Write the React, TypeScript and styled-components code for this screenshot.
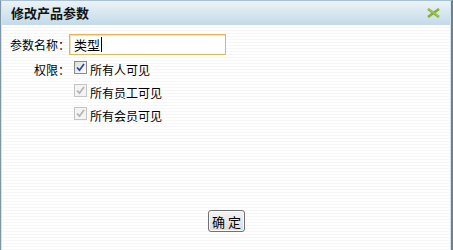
import React from "react";
import styled, { createGlobalStyle } from "styled-components";

const Global = createGlobalStyle`
  html, body { margin: 0; padding: 0; height: 100%; background: #fff; }
  #root { height: 100%; }
  body { font-family: "SimSun", "Noto Sans CJK SC", sans-serif; font-size: 12px; color: #000; }
`;

const Dialog = styled.div`
  box-sizing: border-box;
  height: 250px;
  width: 453px;
  display: flex;
  flex-direction: column;
  border-left: 1px solid #8097a6;
  border-right: 2px solid #6f8089;
  border-top: 1px solid #a8c2d2;
  box-shadow: inset 1px 0 0 #d3e4ee, inset -1px 0 0 #d3e4ee;
`;

const TitleBar = styled.div`
  height: 24px;
  flex: none;
  display: flex;
  align-items: center;
  justify-content: space-between;
  padding: 0 9px 0 9px;
  background: linear-gradient(#ecf3f7, #c3dae8);
  border-left: 1px solid #d3e4ee;
  border-right: 1px solid #d3e4ee;
`;

const Title = styled.div`
  font-family: "Noto Sans CJK SC", sans-serif;
  font-weight: bold;
  font-size: 13px;
  line-height: 24px;
  color: #111;
`;

const CloseBtn = styled.button`
  border: 0;
  background: none;
  padding: 0;
  margin: 0;
  width: 16px;
  height: 12px;
  display: flex;
  align-items: center;
  justify-content: center;
  cursor: pointer;
`;

const Body = styled.div`
  flex: 1;
  display: flex;
  flex-direction: column;
  background: repeating-linear-gradient(#ffffff 0 2px, #f6f6f6 2px 3px);
  border-left: 1px solid #d3e4ee;
  border-right: 1px solid #d3e4ee;
`;

const Form = styled.div`
  display: grid;
  grid-template-columns: 60px 1fr;
  column-gap: 0;
  padding: 8px 0 0 8px;
  align-items: center;
  grid-auto-rows: 23px;
  row-gap: 0;
`;

const Label = styled.div<{ $first?: boolean }>`
  font-family: "Noto Sans CJK SC", sans-serif;
  text-align: right;
  white-space: nowrap;
  font-size: 12px;
  line-height: 23px;
  margin-top: ${(p) => (p.$first ? "0" : "3px")};
`;

const Cell = styled.div<{ $first?: boolean }>`
  display: flex;
  align-items: center;
  margin-top: ${(p) => (p.$first ? "0" : "3px")};
`;

const Field = styled.div`
  box-sizing: border-box;
  width: 157px;
  height: 21px;
  margin-left: -1px;
  border: 1px solid #e3b65c;
  box-shadow: inset 1px 1px 1px #f0dcb0;
  background: #fff;
  display: flex;
  align-items: center;
  padding-left: 4px;
  font-family: "Noto Sans CJK SC", sans-serif;
  font-size: 13px;
`;

const Caret = styled.span`
  display: inline-block;
  width: 1px;
  height: 15px;
  background: #000;
  margin-left: 1px;
`;

const CheckRow = styled.label`
  display: flex;
  align-items: center;
  gap: 3px;
  margin-left: 4px;
  font-family: "Noto Sans CJK SC", sans-serif;
  font-size: 12px;
`;

const Box = styled.span<{ $disabled?: boolean }>`
  box-sizing: border-box;
  width: 13px;
  height: 13px;
  margin-top: -4px;
  border: 1px solid ${(p) => (p.$disabled ? "#c4c4c4" : "#8b8b8b")};
  background: ${(p) =>
    p.$disabled ? "#f4f4f4" : "linear-gradient(135deg, #dcdcdc, #ffffff)"};
  display: flex;
  align-items: center;
  justify-content: center;
`;

const Footer = styled.div`
  margin-top: auto;
  display: flex;
  justify-content: center;
  padding-bottom: 18px;
`;

const Button = styled.button`
  box-sizing: border-box;
  height: 22px;
  width: 37px;
  padding: 0;
  border: 1px solid #707070;
  border-radius: 3px;
  background: linear-gradient(#f4f4f4, #dcdcdc);
  font-family: "Noto Sans CJK SC", sans-serif;
  font-size: 13px;
  color: #000;
  box-shadow: inset 0 0 0 1px #fafafa;
  margin-left: 1px;
`;

const Check = ({ disabled }: { disabled?: boolean }) => (
  <Box $disabled={disabled}>
    <svg width="9" height="9" viewBox="0 0 9 9">
      <path
        d="M1 4.5 L3.5 7.2 L8 1"
        fill="none"
        stroke={disabled ? "#b4b4b4" : "#2c4d9e"}
        strokeWidth="1.8"
      />
    </svg>
  </Box>
);

export default function App() {
  return (
    <>
      <Global />
      <Dialog>
        <TitleBar>
          <Title>修改产品参数</Title>
          <CloseBtn aria-label="关闭">
            <svg width="15" height="10" viewBox="0 0 15 10">
              <path d="M2 1 L13 9 M13 1 L2 9" stroke="#87b034" strokeWidth="2.6" strokeLinecap="butt" />
              <path d="M2.5 1.2 L13 8.6" stroke="#b5d66a" strokeWidth="0.8" />
            </svg>
          </CloseBtn>
        </TitleBar>
        <Body>
          <Form>
            <Label $first>参数名称：</Label>
            <Cell $first>
              <Field>
                类型<Caret />
              </Field>
            </Cell>
            <Label>权限：</Label>
            <Cell>
              <CheckRow>
                <Check />
                所有人可见
              </CheckRow>
            </Cell>
            <div />
            <Cell>
              <CheckRow>
                <Check disabled />
                所有员工可见
              </CheckRow>
            </Cell>
            <div />
            <Cell>
              <CheckRow>
                <Check disabled />
                所有会员可见
              </CheckRow>
            </Cell>
          </Form>
          <Footer>
            <Button>确 定</Button>
          </Footer>
        </Body>
      </Dialog>
    </>
  );
}
